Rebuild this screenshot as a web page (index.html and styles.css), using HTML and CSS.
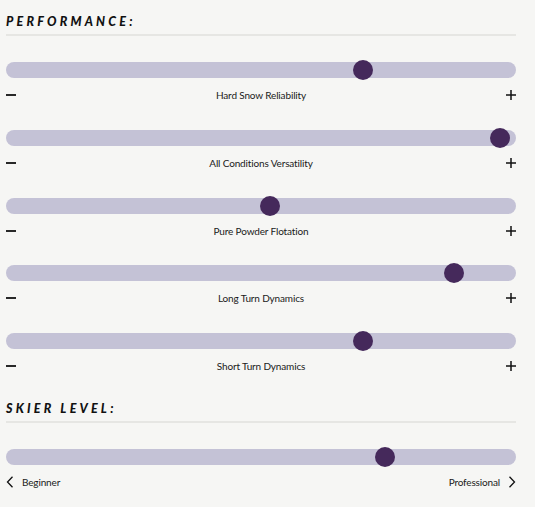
FILE: index.html
```html
<!DOCTYPE html>
<html lang="en">
<head>
<meta charset="utf-8">
<title>Ski profile</title>
<link rel="stylesheet" href="styles.css">
</head>
<body>
<div class="panel">
  <section class="group">
    <h2 class="group-title">Performance:</h2>
    <div class="rows">
      <div class="row">
        <div class="slider"><div class="track"></div><div class="thumb" style="left: 70%"></div></div>
        <div class="scale">
          <svg class="sign" viewBox="0 0 10 10"><path d="M0 5h10"/></svg>
          <span class="label">Hard Snow Reliability</span>
          <svg class="sign plus" viewBox="0 0 10 10"><path d="M0 5h10M5 0v10"/></svg>
        </div>
      </div>
      <div class="row">
        <div class="slider"><div class="track"></div><div class="thumb" style="left: 96.9%"></div></div>
        <div class="scale">
          <svg class="sign" viewBox="0 0 10 10"><path d="M0 5h10"/></svg>
          <span class="label">All Conditions Versatility</span>
          <svg class="sign plus" viewBox="0 0 10 10"><path d="M0 5h10M5 0v10"/></svg>
        </div>
      </div>
      <div class="row">
        <div class="slider"><div class="track"></div><div class="thumb" style="left: 51.8%"></div></div>
        <div class="scale">
          <svg class="sign" viewBox="0 0 10 10"><path d="M0 5h10"/></svg>
          <span class="label">Pure Powder Flotation</span>
          <svg class="sign plus" viewBox="0 0 10 10"><path d="M0 5h10M5 0v10"/></svg>
        </div>
      </div>
      <div class="row">
        <div class="slider"><div class="track"></div><div class="thumb" style="left: 87.9%"></div></div>
        <div class="scale">
          <svg class="sign" viewBox="0 0 10 10"><path d="M0 5h10"/></svg>
          <span class="label">Long Turn Dynamics</span>
          <svg class="sign plus" viewBox="0 0 10 10"><path d="M0 5h10M5 0v10"/></svg>
        </div>
      </div>
      <div class="row">
        <div class="slider"><div class="track"></div><div class="thumb" style="left: 70%"></div></div>
        <div class="scale">
          <svg class="sign" viewBox="0 0 10 10"><path d="M0 5h10"/></svg>
          <span class="label">Short Turn Dynamics</span>
          <svg class="sign plus" viewBox="0 0 10 10"><path d="M0 5h10M5 0v10"/></svg>
        </div>
      </div>
    </div>
  </section>

  <section class="group">
    <h2 class="group-title">Skier Level:</h2>
    <div class="rows">
      <div class="row">
        <div class="slider"><div class="track"></div><div class="thumb" style="left: 74.4%"></div></div>
        <div class="scale level">
          <span class="end">
            <svg class="chev" viewBox="0 0 8 12"><path d="M6.5 0.8L1.5 6l5 5.2"/></svg>
            Beginner
          </span>
          <span class="end">
            Professional
            <svg class="chev" viewBox="0 0 8 12"><path d="M1.5 0.8L6.5 6l-5 5.2"/></svg>
          </span>
        </div>
      </div>
    </div>
  </section>
</div>
</body>
</html>
```

FILE: styles.css
```css
html, body {
  margin: 0;
  background: #f6f6f4;
}

body {
  font-family: Lato, "Open Sans", sans-serif;
  color: #1c1c22;
}

.panel {
  width: 510px;
  padding: 14px 19px 0 6px;
}

.group + .group {
  margin-top: 26.5px;
}

.group-title {
  margin: 0;
  font-size: 12.5px;
  line-height: 16px;
  font-weight: 900;
  font-style: italic;
  letter-spacing: 3.2px;
  text-transform: uppercase;
  color: #111;
  padding-bottom: 4px;
  border-bottom: 2px solid #e6e6e3;
}

.rows {
  display: flex;
  flex-direction: column;
  gap: 24.75px;
  margin-top: 24px;
}

.slider {
  position: relative;
  height: 20px;
  display: flex;
  align-items: center;
}

.track {
  flex: 1;
  height: 16px;
  border-radius: 8px;
  background: #c4c2d6;
}

.thumb {
  position: absolute;
  top: 0;
  width: 20px;
  height: 20px;
  margin-left: -10px;
  border-radius: 50%;
  background: #45295b;
}

.scale {
  display: flex;
  align-items: center;
  margin-top: 7px;
  height: 16px;
  font-size: 10px;
  letter-spacing: -0.15px;
  color: #1a1a20;
}

.label {
  flex: 1;
  text-align: center;
}

.sign {
  width: 10px;
  height: 10px;
  stroke: #111;
  stroke-width: 1.8;
  fill: none;
}

.sign.plus {
  stroke-width: 1.5;
}

.level {
  justify-content: space-between;
}

.end {
  display: flex;
  align-items: center;
  gap: 8px;
}

.chev {
  width: 8px;
  height: 12px;
  stroke: #111;
  stroke-width: 1.3;
  fill: none;
}
```
